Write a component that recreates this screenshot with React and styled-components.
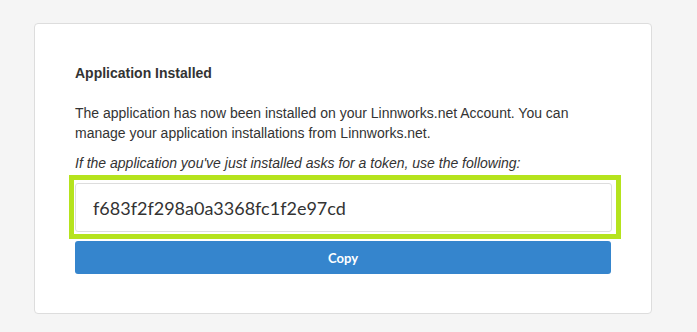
import styled, { createGlobalStyle } from "styled-components";

const GlobalStyle = createGlobalStyle`
  html, body {
    margin: 0;
    padding: 0;
    background-color: #f5f5f5;
    font-family: "Liberation Sans", Arial, sans-serif;
    color: #333;
  }
`;

const Page = styled.div`
  padding: 23px 45px 18px 34px;
`;

const Card = styled.div`
  background-color: #fff;
  border: 1px solid #dddddd;
  border-radius: 4px;
  padding: 39px 40px 39px 40px;
  box-sizing: border-box;
  width: 618px;
`;

const Heading = styled.h5`
  font-size: 14px;
  font-weight: bold;
  line-height: 20px;
  margin: 0 0 20px 0;
`;

const Text = styled.p`
  font-size: 14px;
  line-height: 20px;
  margin: 0 0 ${(p) => (p.$italic ? "0" : "10px")} 0;
  font-style: ${(p) => (p.$italic ? "italic" : "normal")};
`;

const Highlight = styled.div`
  border: 5px solid #b5e31d;
  margin: 2px -10px 0 -6px;
  padding: 3px 4px 2px 1px;
`;

const TokenInput = styled.input`
  display: block;
  width: 100%;
  box-sizing: border-box;
  height: 49px;
  border: 1px solid #dddddd;
  border-radius: 3px;
  padding: 0 17px;
  font-family: Lato, "Liberation Sans", sans-serif;
  font-size: 18px;
  color: #333;
  background: #fff;
  outline: none;
`;

const CopyButton = styled.button`
  display: block;
  width: 100%;
  height: 33px;
  margin-top: 2px;
  border: none;
  border-radius: 3px;
  background-color: #3585cd;
  color: #fff;
  font-family: Lato, "Liberation Sans", sans-serif;
  font-weight: bold;
  font-size: 13px;
  cursor: pointer;
`;

const App = () => {
  const token = "f683f2f298a0a3368fc1f2e97cd";

  const _handleCopy = () => {
    if (navigator.clipboard) navigator.clipboard.writeText(token).catch(() => {});
  };

  return (
    <Page>
      <GlobalStyle />
      <Card>
        <Heading>Application Installed</Heading>
        <Text>
          The application has now been installed on your Linnworks.net Account. You can
          manage your application installations from Linnworks.net.
        </Text>
        <Text $italic>
          If the application you've just installed asks for a token, use the following:
        </Text>
        <Highlight>
          <TokenInput type="text" readOnly value={token} />
        </Highlight>
        <CopyButton onClick={_handleCopy}>Copy</CopyButton>
      </Card>
    </Page>
  );
};

export default App;
